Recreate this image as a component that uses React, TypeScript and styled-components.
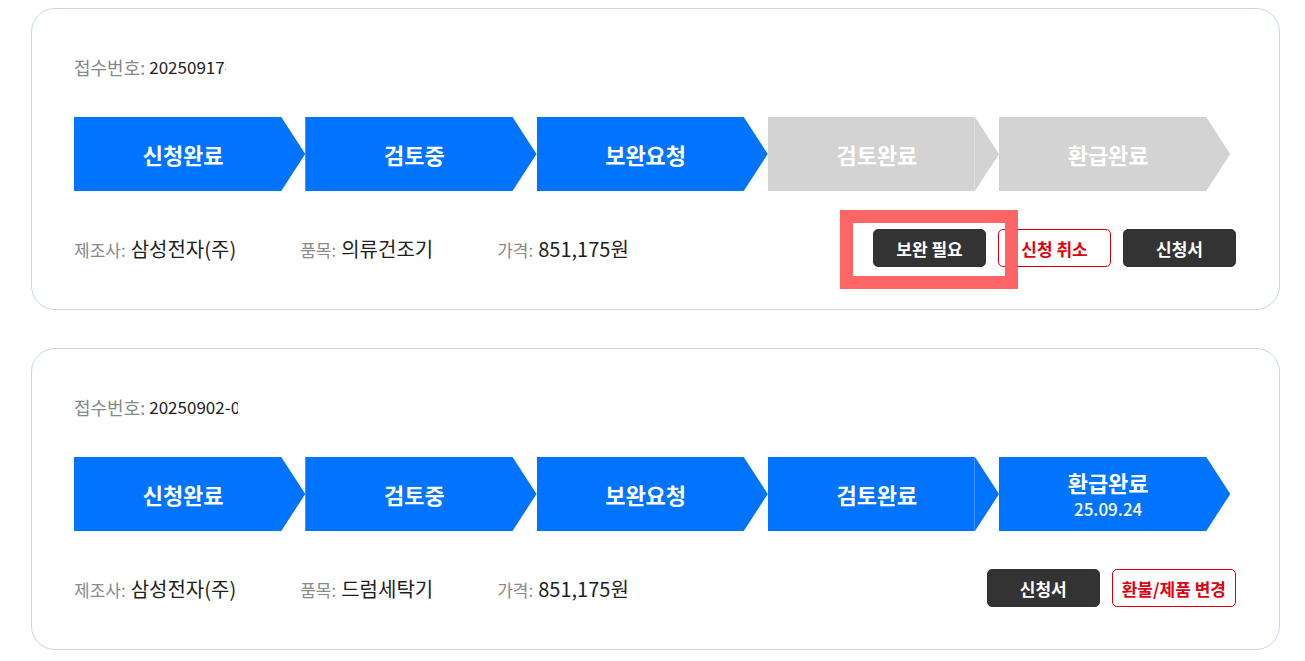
import React from "react";
import styled, { createGlobalStyle, css } from "styled-components";

const GlobalStyle = createGlobalStyle`
  html, body { margin: 0; padding: 0; background: #ffffff; }
  body { font-family: "Noto Sans CJK KR", "Noto Sans", sans-serif; color: #222; }
  * { box-sizing: border-box; }
`;

const Page = styled.div`
  display: flex;
  flex-direction: column;
  gap: 38px;
  padding: 8px 25px 0 31px;
`;

const Card = styled.section`
  border: 1px solid #c4d9ee;
  border-radius: 24px;
  background: #fff;
  padding: 46px 43px 42px 42px;
  display: flex;
  flex-direction: column;
`;

const Header = styled.div`
  display: flex;
  align-items: center;
  height: 24px;
  font-size: 18px;
  line-height: 24px;
`;

const HeaderLabel = styled.span`
  color: #888;
  margin-right: 4px;
`;

const HeaderValue = styled.span<{ $clip: number }>`
  display: inline-block;
  color: #222;
  font-size: 17px;
  width: ${(p) => p.$clip}px;
  overflow: hidden;
  white-space: nowrap;
`;

const Steps = styled.div`
  display: grid;
  grid-template-columns: repeat(5, 231.25px);
  margin-top: 38px;
  height: 74px;
`;

const Step = styled.div<{ $active: boolean; $seam?: boolean }>`
  position: relative;
  height: 74px;
  background: ${(p) => (p.$active ? "#0073ff" : "#d3d3d3")};
  clip-path: polygon(0 0, calc(100% - 24px) 0, 100% 50%, calc(100% - 24px) 100%, 0 100%);
  display: flex;
  flex-direction: column;
  align-items: center;
  justify-content: center;
  padding-right: 13px;
  color: #fff;
  ${(p) =>
    p.$seam &&
    css`
      &::after {
        content: "";
        position: absolute;
        top: 0;
        bottom: 0;
        right: 24px;
        width: 1px;
        background: rgba(255, 255, 255, 0.25);
      }
    `}
`;

const StepTitle = styled.span`
  font-size: 22px;
  font-weight: 700;
  line-height: 26px;
`;

const StepDate = styled.span`
  font-size: 17px;
  font-weight: 500;
  line-height: 22px;
  margin-top: 3px;
`;

const InfoRow = styled.div`
  display: flex;
  align-items: center;
  justify-content: space-between;
  margin-top: 38px;
  height: 38px;
`;

const InfoList = styled.div`
  display: flex;
  align-items: center;
  gap: 64px;
`;

const InfoItem = styled.div`
  display: flex;
  align-items: baseline;
  gap: 5px;
`;

const InfoLabel = styled.span`
  font-size: 17px;
  color: #8a8a8a;
`;

const InfoValue = styled.span`
  font-size: 20px;
  font-weight: 400;
  color: #1e1e1e;
`;

const Actions = styled.div`
  display: flex;
  align-items: center;
  gap: 12px;
`;

const Button = styled.button<{ $variant: "dark" | "outline" }>`
  height: 38px;
  min-width: 113px;
  padding: 0 9px;
  border-radius: 5px;
  font-family: inherit;
  font-size: 17px;
  font-weight: 700;
  cursor: pointer;
  ${(p) =>
    p.$variant === "dark"
      ? css`
          background: #333;
          color: #fff;
          border: 1px solid #333;
        `
      : css`
          background: #fff;
          color: #e0000e;
          border: 1px solid #d8000c;
        `}
`;

const Highlighted = styled.span`
  position: relative;
  display: inline-flex;
`;

const HighlightBox = styled.span`
  position: absolute;
  top: -19px;
  bottom: -22px;
  left: -33px;
  right: -32px;
  border: 13px solid #ff6565;
  pointer-events: none;
  z-index: 2;
`;

type StepData = { title: string; active: boolean; date?: string };

const stepNames = ["신청완료", "검토중", "보완요청", "검토완료", "환급완료"];

const StepBar = ({ activeCount, lastDate }: { activeCount: number; lastDate?: string }) => {
  const steps: StepData[] = stepNames.map((t, i) => ({
    title: t,
    active: i < activeCount,
    date: i === 4 ? lastDate : undefined,
  }));
  return (
    <Steps>
      {steps.map((s, i) => (
        <Step key={s.title} $active={s.active} $seam={i === 3}>
          <StepTitle>{s.title}</StepTitle>
          {s.date && <StepDate>{s.date}</StepDate>}
        </Step>
      ))}
    </Steps>
  );
};

const Info = ({ maker, item, price }: { maker: string; item: string; price: string }) => (
  <InfoList>
    <InfoItem>
      <InfoLabel>제조사:</InfoLabel>
      <InfoValue>{maker}</InfoValue>
    </InfoItem>
    <InfoItem>
      <InfoLabel>품목:</InfoLabel>
      <InfoValue>{item}</InfoValue>
    </InfoItem>
    <InfoItem>
      <InfoLabel>가격:</InfoLabel>
      <InfoValue>{price}</InfoValue>
    </InfoItem>
  </InfoList>
);

export default function App() {
  return (
    <>
      <GlobalStyle />
      <Page>
        <Card>
          <Header>
            <HeaderLabel>접수번호:</HeaderLabel>
            <HeaderValue $clip={77}>20250917-000153</HeaderValue>
          </Header>
          <StepBar activeCount={3} />
          <InfoRow>
            <Info maker="삼성전자(주)" item="의류건조기" price="851,175원" />
            <Actions>
              <Highlighted>
                <Button $variant="dark">보완 필요</Button>
                <HighlightBox />
              </Highlighted>
              <Button $variant="outline">신청 취소</Button>
              <Button $variant="dark">신청서</Button>
            </Actions>
          </InfoRow>
        </Card>
        <Card>
          <Header>
            <HeaderLabel>접수번호:</HeaderLabel>
            <HeaderValue $clip={89}>20250902-000087</HeaderValue>
          </Header>
          <StepBar activeCount={5} lastDate="25.09.24" />
          <InfoRow>
            <Info maker="삼성전자(주)" item="드럼세탁기" price="851,175원" />
            <Actions>
              <Button $variant="dark">신청서</Button>
              <Button $variant="outline">환불/제품 변경</Button>
            </Actions>
          </InfoRow>
        </Card>
      </Page>
    </>
  );
}
